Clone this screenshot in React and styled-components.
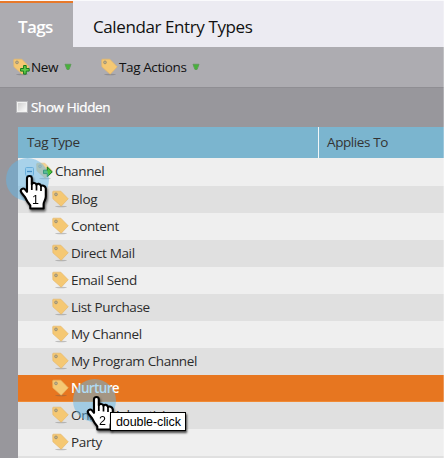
import React from "react";
import styled, { createGlobalStyle, css } from "styled-components";

const GlobalStyle = createGlobalStyle`
  *, *::before, *::after { box-sizing: border-box; }
  body { margin: 0; background: #fff; font-family: "Open Sans", "Noto Sans", sans-serif; overflow: hidden; }
`;

const Page = styled.div`
  position: relative;
  display: flex;
  flex-direction: column;
  width: 444px;
  height: 458px;
  overflow: hidden;
  background: #98979c;
  &::after {
    content: "";
    position: absolute;
    top: 0;
    right: 0;
    width: 1px;
    height: 100%;
    background: rgba(255, 255, 255, 0.25);
  }
`;

const TabBar = styled.nav`
  display: flex;
  flex: none;
  height: 47px;
  background: #ecebf2;
  border-top: 1px solid #fafafc;
`;

const Tab = styled.div`
  display: flex;
  align-items: center;
  padding: ${(p) => (p.$active ? "0 0 0 18px" : "6px 0 0 20px")};
  font-size: 17px;
  line-height: 24px;
  white-space: nowrap;
  color: #111;
  letter-spacing: -0.4px;
  ${(p) =>
    p.$active &&
    css`
      width: 73px;
      padding-top: 4px;
      color: #fff;
      font-weight: 600;
      letter-spacing: -0.6px;
      background: #adacb1;
      border-top: 2px solid #e8792a;
    `}
`;

const Label = styled.span`
  white-space: nowrap;
`;

const Toolbar = styled.div`
  display: flex;
  flex: none;
  align-items: center;
  height: 41px;
  padding: 0 0 1px 13px;
  gap: 29px;
  background: #adacb1;
  border-bottom: 1px solid #8f8e93;
`;

const ToolButton = styled.div`
  display: flex;
  align-items: center;
  font-size: 13.5px;
  line-height: 20px;
  letter-spacing: -0.4px;
  color: #111;
  svg:first-child { margin-right: 1px; }
  svg:last-child { margin-left: 6px; }
`;

const FilterRow = styled.label`
  display: flex;
  flex: none;
  align-items: center;
  height: 39px;
  padding: 0 0 1px 16px;
  gap: 3px;
  font-size: 13.5px;
  letter-spacing: -0.4px;
  color: #fff;
  -webkit-text-stroke: 0.25px #fff;
`;

const Checkbox = styled.span`
  width: 12px;
  height: 12px;
  background: linear-gradient(135deg, #cfcfcf, #fafafa);
  border: 2px solid #f1f1f1;
  outline: 1px solid #b5b5b8;
  outline-offset: -1px;
`;

const Grid = styled.div`
  display: flex;
  flex: none;
  flex-direction: column;
  margin-left: 18px;
`;

const HeaderRow = styled.div`
  display: grid;
  grid-template-columns: 300px 1fr;
  height: 31px;
  font-size: 13.5px;
  letter-spacing: -0.4px;
  color: #333;
  background: #7bb5cf;
`;

const HeaderCell = styled.div`
  display: flex;
  align-items: center;
  padding: 0 0 1px 9px;
  & + & { padding-left: 8px; border-left: 1px solid #f2f6f8; }
`;

const Row = styled.div`
  display: flex;
  align-items: center;
  height: ${(p) => (p.$root ? 28 : 27)}px;
  padding: 0 0 ${(p) => (p.$selected ? 0 : 2)}px ${(p) => (p.$root ? 7 : 34)}px;
  font-size: 13.5px;
  letter-spacing: ${(p) => (p.$selected ? -0.65 : -0.35)}px;
  color: ${(p) => (p.$selected ? "#fff" : "#2c2c2c")};
  font-weight: ${(p) => (p.$selected ? 600 : 400)};
  background: ${(p) => (p.$selected ? "#e77620" : p.$alt ? "#e0e0e0" : "#efefef")};
  border-bottom: ${(p) => (p.$selected ? "1px solid #f08a34" : "0")};
`;

const Halo = styled.div`
  position: absolute;
  left: ${(p) => p.$x}px;
  top: ${(p) => p.$y}px;
  width: 43px;
  height: 43px;
  border-radius: 50%;
  background: rgba(97, 181, 230, 0.5);
`;

const Pointer = styled.svg`
  position: absolute;
  left: ${(p) => p.$x}px;
  top: ${(p) => p.$y}px;
  overflow: visible;
  filter: drop-shadow(1px 2px 1px rgba(0, 0, 0, 0.6));
`;

const Tooltip = styled.div`
  position: absolute;
  left: 110px;
  top: 412px;
  display: flex;
  align-items: center;
  width: 76px;
  height: 19px;
  padding-left: 5px;
  font: 12.5px "Liberation Sans", Arial, sans-serif;
  letter-spacing: -0.1px;
  white-space: nowrap;
  color: #000;
  background: #fff;
  border: 1px solid #000;
  box-shadow: 1px 2px 2px rgba(0, 0, 0, 0.7);
`;

const TagShape = styled.svg`
  flex: none;
  margin-left: ${(p) => p.$before || 0}px;
  margin-right: 2px;
`;

function TagIcon({ before, badge, faded }) {
  return (
    <TagShape $before={before} width="17" height="18" viewBox="0 0 17 18">
      <ellipse cx="9" cy="16.500" rx="6" ry="0.8" fill="#555" opacity="0.32" />
      <g opacity={faded ? 0.75 : 1}>
        <path d="M0.700 2Q0.700 1.200 1.500 1.200L8.800 1.200 16.200 8.800 9.200 16.200 0.900 8.800Z" fill="#f5c873" stroke="#e6b76a" strokeWidth="0.7" strokeLinejoin="round" />
        <circle cx="4" cy="4.400" r="1.400" fill="#c2b089" stroke="#9a9073" strokeWidth="0.9" />
      </g>
      {badge === "plus" && (
        <path d="M10.600 7.500h2.600v3h3v2.600h-3v3h-2.600v-3h-3v-2.600h3Z" fill="#5fca48" stroke="#14791b" strokeWidth="1" />
      )}
      {badge === "arrow" && (
        <path d="M7.500 8.200h3.800V5l5 4.900-5 4.900v-3.200H7.500Z" fill="#4dc23c" stroke="#137b1c" strokeWidth="1" />
      )}
    </TagShape>
  );
}

function Caret() {
  return (
    <svg width="8" height="8" viewBox="0 0 8 8">
      <path d="M1 1.300h6L5 6.500H3Z" fill="#46b339" stroke="#5f9c5a" strokeWidth="1" strokeLinejoin="round" />
    </svg>
  );
}

function Collapse() {
  return (
    <svg width="9" height="9" viewBox="0 0 9 9">
      <rect x="0.5" y="0.5" width="8" height="8" rx="1" fill="#d5e9f8" stroke="#71a6cf" />
      <path d="M2 4.500h5" stroke="#2767a2" strokeWidth="1.300" />
    </svg>
  );
}

function HandPointer({ x, y, step }) {
  return (
    <Pointer $x={x} $y={y} width="28" height="36" viewBox="0 0 28 36">
      <path
        d="M7 3.300C7 .2 11.800 .2 11.800 3.300V9.300C12.300 7.300 16 7.500 16.500 9.700C17.200 8.200 20.500 8.500 21 11C22 10 25.300 10.700 25.800 13.500V21.500C25.800 25 23.600 26.500 23.600 29V33.500H10.300V30.500C8 28 6.500 25.500 4.800 21.800L1.300 17.500C-.5 14.500 3 12.300 5 14.400L7 16.800Z"
        fill="#fff"
        stroke="#000"
        strokeWidth="2.100"
        strokeLinejoin="round"
      />
      <path d="M11.800 8.500V15M16.500 9.500V15.500M21 11V16" stroke="#000" strokeWidth="1.700" />
      <text x="15.500" y="29" textAnchor="middle" fontFamily="Liberation Sans, Arial, sans-serif" fontSize="12.500" fill="#000">{step}</text>
    </Pointer>
  );
}

const CHANNELS = ["Blog", "Content", "Direct Mail", "Email Send", "List Purchase", "My Channel", "My Program Channel", "Nurture", "Online Advertising", "Party"];

export default function App() {
  return (
    <>
      <GlobalStyle />
      <Page>
        <TabBar>
          <Tab $active><Label>Tags</Label></Tab>
          <Tab><Label>Calendar Entry Types</Label></Tab>
        </TabBar>
        <Toolbar>
          <ToolButton><TagIcon badge="plus" /><Label>New</Label><Caret /></ToolButton>
          <ToolButton><TagIcon /><Label>Tag Actions</Label><Caret /></ToolButton>
        </Toolbar>
        <FilterRow><Checkbox /><Label>Show Hidden</Label></FilterRow>
        <Grid>
          <HeaderRow>
            <HeaderCell>Tag Type</HeaderCell>
            <HeaderCell>Applies To</HeaderCell>
          </HeaderRow>
          <Row $root><Collapse /><TagIcon before={2} badge="arrow" faded /><Label>Channel</Label></Row>
          {CHANNELS.map((name, i) => (
            <Row key={name} $alt={i % 2 === 0} $selected={name === "Nurture"}>
              <TagIcon /><Label>{name}</Label>
            </Row>
          ))}
          <Row $alt />
        </Grid>
        <Halo $x={6} $y={158} />
        <HandPointer x={20} y={175} step={1} />
        <Halo $x={73} $y={379} />
        <HandPointer x={87} y={396} step={2} />
        <Tooltip>double-click</Tooltip>
      </Page>
    </>
  );
}
